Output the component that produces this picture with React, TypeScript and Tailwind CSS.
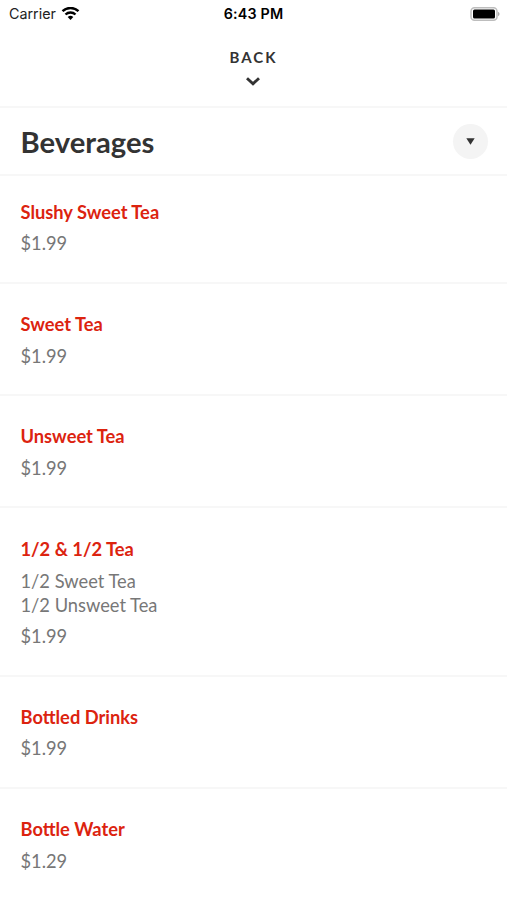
import clsx from 'clsx'

type MenuItem = {
  name: string
  price: string
  details?: string[]
}

const items: MenuItem[] = [
  { name: 'Slushy Sweet Tea', price: '$1.99' },
  { name: 'Sweet Tea', price: '$1.99' },
  { name: 'Unsweet Tea', price: '$1.99' },
  { name: '1/2 & 1/2 Tea', price: '$1.99', details: ['1/2 Sweet Tea', '1/2 Unsweet Tea'] },
  { name: 'Bottled Drinks', price: '$1.99' },
  { name: 'Bottle Water', price: '$1.29' },
]

export default function App() {
  return (
    <div className="h-[900px] w-full overflow-hidden bg-white font-['Lato',sans-serif] text-[#333333]">
      <StatusBar />

      <header className="flex h-[80px] flex-col items-center border-b-2 border-[#f7f7f7] pt-[19px]">
        <button className="flex flex-col items-center">
          <span className="text-[15px] leading-5 font-bold tracking-[2px]">BACK</span>
          <svg width="16" height="10" viewBox="0 0 16 10" fill="none" className="mt-[9px]">
            <path d="M2 2.2l6 5.6 6-5.6" stroke="#333" strokeWidth="2.9" />
          </svg>
        </button>
      </header>

      <div className="flex h-[68px] items-center justify-between border-b-2 border-[#f7f7f7] pr-[19px] pl-[20.5px]">
        <h1 className="pt-[2px] text-[29.2px] font-bold">Beverages</h1>
        <button className="flex size-[35px] items-center justify-center rounded-full bg-[#f4f4f4]">
          <svg width="9" height="7" viewBox="0 0 9 7">
            <path d="M0.3 0.3h8.4L4.5 6.7z" fill="#333" />
          </svg>
        </button>
      </div>

      <ul>
        {items.map((item, i) => (
          <MenuRow key={item.name} item={item} first={i === 0} />
        ))}
      </ul>
    </div>
  )
}

function StatusBar() {
  return (
    <div className="grid h-[28px] grid-cols-3 items-center pr-[7px] pl-[9px] font-['Inter',sans-serif] text-[14.3px] text-black">
      <div className="flex items-center gap-[5px]">
        <span className="text-[#222222]">Carrier</span>
        <svg width="19" height="14" viewBox="0 0 18 14" fill="none" stroke="#000" strokeWidth="2.4">
          <path d="M1 4.2a11.5 11.5 0 0 1 16 0" />
          <path d="M4 7.5a7.2 7.2 0 0 1 10 0" />
          <path d="M9 13L6.2 10.1a4 4 0 0 1 5.6 0z" fill="#000" stroke="none" />
        </svg>
      </div>
      <span className="pr-[2px] text-center font-semibold tracking-[0.2px]">6:43 PM</span>
      <svg width="30" height="14" viewBox="0 0 30 14" className="justify-self-end">
        <rect x="1" y="0.75" width="26" height="12.5" rx="3.5" fill="#fff" stroke="#bdbdbd" strokeWidth="1.5" />
        <rect x="3" y="2.5" width="22" height="9" rx="1.5" fill="#000" />
        <path d="M28.2 4.8v4.4c1.7-.8 1.7-3.6 0-4.4z" fill="#999" />
      </svg>
    </div>
  )
}

function MenuRow({ item, first }: { item: MenuItem; first: boolean }) {
  return (
    <li
      className={clsx(
        'border-b-2 border-[#f7f7f7] px-[20.5px] pb-[26.4px] last:border-b-0',
        first ? 'pt-[22.6px]' : 'pt-[27.4px]',
      )}
    >
      <h2 className="text-[18.3px] leading-[26px] font-bold text-[#dc230f]">{item.name}</h2>
      {item.details && (
        <div className="mt-[6.8px] text-[18.3px] leading-[24.5px] text-[#777777]">
          {item.details.map((line) => (
            <p key={line}>{line}</p>
          ))}
        </div>
      )}
      <p className="mt-[6.6px] text-[18.3px] leading-[24px] text-[#777777]">{item.price}</p>
    </li>
  )
}
